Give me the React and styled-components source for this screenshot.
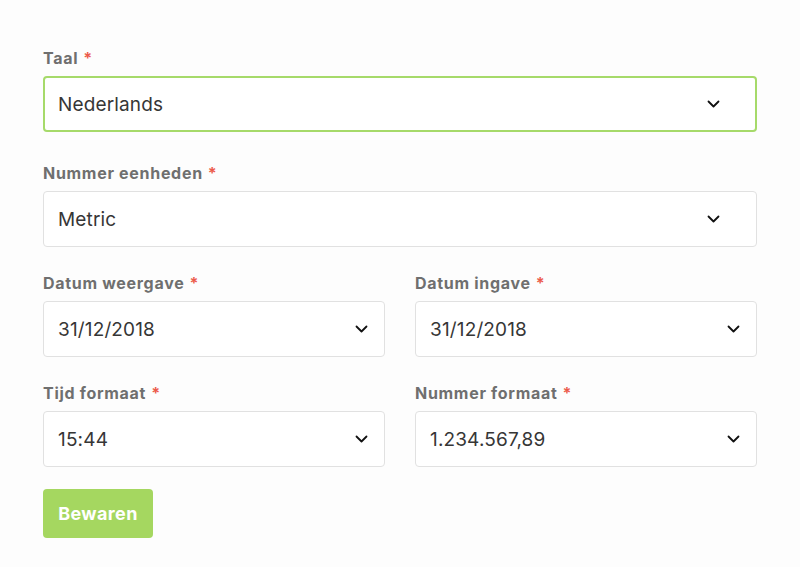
import React from 'react';
import styled, { createGlobalStyle } from 'styled-components';

const GlobalStyle = createGlobalStyle`
  body {
    margin: 0;
    background: #fdfdfd;
    font-family: Inter, "Liberation Sans", Arial, sans-serif;
  }
`;

const Form = styled.form`
  display: flex;
  flex-direction: column;
  gap: 26px;
  padding: 48px 43px 0;
  width: 714px;
`;

const Row = styled.div`
  display: grid;
  grid-template-columns: 1fr 1fr;
  gap: 30px;
`;

const Field = styled.div`
  display: flex;
  flex-direction: column;
  gap: 8px;
  margin-bottom: ${(p) => (p.$extra ? '5px' : '0')};
`;

const Label = styled.label`
  font-size: 16px;
  line-height: 20px;
  font-weight: 700;
  letter-spacing: 0.7px;
  color: #6f6f6f;
`;

const Star = styled.span`
  color: #ec5b4b;
  margin-left: 5px;
`;

const Select = styled.div`
  box-sizing: border-box;
  height: 56px;
  display: flex;
  align-items: center;
  justify-content: space-between;
  padding: 0 ${(p) => (p.$wide ? (p.$focused ? '35px' : '36px') : '16px')} 0
    ${(p) => (p.$focused ? '13px' : '14px')};
  background: #fff;
  border: ${(p) => (p.$focused ? '2px solid #a6da6a' : '1px solid #e1e1e1')};
  border-radius: 4px;
  font-size: 19px;
  letter-spacing: 0.15px;
  color: #363636;
`;

const Chevron = () => (
  <svg width="13" height="8" viewBox="0 0 13 8" fill="none">
    <path d="M1.5 1.5l5 5 5-5" stroke="#111" strokeWidth="1.8" strokeLinecap="round" strokeLinejoin="round" />
  </svg>
);

const SaveButton = styled.button`
  align-self: flex-start;
  margin-top: -4px;
  width: 110px;
  height: 49px;
  border: none;
  border-radius: 4px;
  background: #a5d760;
  color: #fff;
  font-family: inherit;
  font-size: 18px;
  font-weight: 700;
  letter-spacing: 0.4px;
`;

const SelectField = ({ label, value, wide, focused, extra }) => (
  <Field $extra={extra}>
    <Label>
      {label}
      <Star>*</Star>
    </Label>
    <Select $wide={wide} $focused={focused}>
      <span>{value}</span>
      <Chevron />
    </Select>
  </Field>
);

export default function App() {
  return (
    <>
      <GlobalStyle />
      <Form onSubmit={(e) => e.preventDefault()}>
        <SelectField label="Taal" value="Nederlands" wide focused extra />
        <SelectField label="Nummer eenheden" value="Metric" wide />
        <Row>
          <SelectField label="Datum weergave" value="31/12/2018" />
          <SelectField label="Datum ingave" value="31/12/2018" />
        </Row>
        <Row>
          <SelectField label="Tijd formaat" value="15:44" />
          <SelectField label="Nummer formaat" value="1.234.567,89" />
        </Row>
        <SaveButton type="submit">Bewaren</SaveButton>
      </Form>
    </>
  );
}
